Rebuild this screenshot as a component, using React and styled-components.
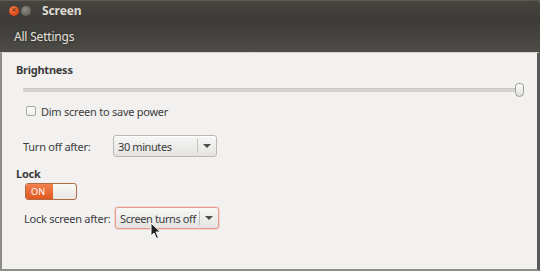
import React from "react";
import styled, { createGlobalStyle } from "styled-components";

const Global = createGlobalStyle`
  html, body { margin: 0; padding: 0; background: #5a5955; }
  body { font-family: "Noto Sans", "DejaVu Sans", sans-serif; }
`;

const Window = styled.div`
  width: 540px;
  height: 271px;
  display: flex;
  flex-direction: column;
  overflow: hidden;
  position: relative;
  background: #3c3b37;
  border-top-right-radius: 6px;
`;

const TitleBar = styled.div`
  height: 20px;
  display: flex;
  align-items: center;
  padding-left: 9px;
  gap: 2px;
  background: linear-gradient(#45443f, #3c3b37);
  border-top: 1px solid #5c5b56;
  box-sizing: border-box;
`;

const WinButton = styled.span`
  width: 10px;
  height: 10px;
  border-radius: 50%;
  background: ${(p) => (p.$close ? "radial-gradient(circle at 40% 35%, #f48a5c, #df4a16 60%, #b83a10)" : "radial-gradient(circle at 40% 35%, #8c8b86, #6b6a65 60%, #55544f)")};
  display: flex;
  align-items: center;
  justify-content: center;
  font-size: 7px;
  line-height: 1;
  color: #7a2a0a;
  font-weight: bold;
  font-family: "DejaVu Sans", sans-serif;
`;

const Title = styled.span`
  margin-left: 9px;
  font-size: 12px;
  font-weight: bold;
  color: #dfdbd2;
  letter-spacing: -0.1px;
`;

const Toolbar = styled.div`
  height: 32px;
  display: flex;
  align-items: center;
  padding-left: 14px;
  background: linear-gradient(#3c3b37, #4d4c47);
`;

const ToolText = styled.span`
  font-size: 12px;
  color: #e4e1da;
  letter-spacing: -0.2px;
  text-shadow: 0 0 3px #2a2926;
`;

const Content = styled.div`
  flex: 1;
  background: #f2f1f0;
  border-left: 2px solid #8e8d89;
  border-right: 3px solid #5a5955;
  border-bottom: 2px solid #8e8d89;
  border-top: 1px solid #d8d6d2;
  padding: 5px 14px 0 14px;
  display: flex;
  flex-direction: column;
  font-size: 11px;
  color: #3c3c3c;
  letter-spacing: -0.25px;
`;

const Heading = styled.div`
  font-weight: bold;
  font-size: 11px;
  color: #3c3c3c;
  height: ${(p) => p.$h || 20}px;
  margin-top: ${(p) => p.$top || 0}px;
  display: flex;
  align-items: center;
`;

const SliderRow = styled.div`
  height: 18px;
  margin: 1px 0 0 7px;
  width: 501px;
  position: relative;
  display: flex;
  align-items: center;
`;

const Track = styled.div`
  flex: 1;
  height: 3px;
  background: #d6d4d0;
  border-top: 1px solid #c8c6c2;
  border-radius: 1px;
`;

const Handle = styled.div`
  position: absolute;
  right: 0;
  top: 2px;
  width: 7px;
  height: 12px;
  border: 1px solid #9a9995;
  border-radius: 4px 4px 5px 5px;
  background: linear-gradient(#fbfbfa, #e2e1de);
`;

const CheckRow = styled.label`
  display: flex;
  align-items: center;
  gap: 5px;
  height: 20px;
  margin: 2px 0 0 10px;
`;

const Box = styled.span`
  width: 8px;
  height: 8px;
  border: 1px solid #a9a8a4;
  border-radius: 2px;
  background: linear-gradient(#ffffff, #eeeeec);
`;

const FieldRow = styled.div`
  display: flex;
  align-items: center;
  margin-left: ${(p) => p.$indent}px;
  margin-top: ${(p) => p.$top}px;
  height: 22px;
`;

const FieldLabel = styled.span`
  width: ${(p) => p.$w}px;
  flex-shrink: 0;
`;

const Combo = styled.div`
  width: 104px;
  height: 22px;
  box-sizing: border-box;
  border: 1px solid ${(p) => (p.$focus ? "#e49a8a" : "#b9b8b4")};
  box-shadow: ${(p) => (p.$focus ? "0 0 0 1px #f2d6cf" : "0 1px 0 #fff inset")};
  border-radius: 3px;
  background: linear-gradient(#f7f7f6, #e4e3e0);
  display: flex;
  align-items: center;
  padding-left: 4px;
`;

const ComboText = styled.span`
  flex: 1;
  white-space: nowrap;
  letter-spacing: -0.4px;
`;

const Sep = styled.span`
  width: 1px;
  height: 14px;
  background: #c4c3bf;
  margin-right: 5px;
`;

const Arrow = styled.span`
  width: 0;
  height: 0;
  border-left: 4px solid transparent;
  border-right: 4px solid transparent;
  border-top: 4px solid #4c4c4c;
  margin-right: 5px;
`;

const Switch = styled.div`
  width: 52px;
  height: 17px;
  box-sizing: border-box;
  margin-left: 9px;
  margin-top: 1px;
  border: 1px solid #b26a45;
  border-radius: 3px;
  overflow: hidden;
  display: flex;
  background: linear-gradient(#f9f9f8, #e6e5e2);
`;

const SwitchOn = styled.span`
  width: 27px;
  background: linear-gradient(#f2804f, #e0591f);
  color: #fff;
  font-size: 9px;
  letter-spacing: 0.3px;
  display: flex;
  align-items: center;
  padding-left: 5px;
  box-sizing: border-box;
`;

const Cursor = styled.svg`
  position: absolute;
  left: 150px;
  top: 222px;
`;

export default function App() {
  return (
    <>
      <Global />
      <Window>
        <TitleBar>
          <WinButton $close>×</WinButton>
          <WinButton />
          <Title>Screen</Title>
        </TitleBar>
        <Toolbar>
          <ToolText>All Settings</ToolText>
        </Toolbar>
        <Content>
          <Heading $h={22}>Brightness</Heading>
          <SliderRow>
            <Track />
            <Handle />
          </SliderRow>
          <CheckRow>
            <Box />
            <span>Dim screen to save power</span>
          </CheckRow>
          <FieldRow $indent={7} $top={14}>
            <FieldLabel $w={90}>Turn off after:</FieldLabel>
            <Combo>
              <ComboText>30 minutes</ComboText>
              <Sep />
              <Arrow />
            </Combo>
          </FieldRow>
          <Heading $h={18} $top={7}>Lock</Heading>
          <Switch>
            <SwitchOn>ON</SwitchOn>
          </Switch>
          <FieldRow $indent={8} $top={7}>
            <FieldLabel $w={91}>Lock screen after:</FieldLabel>
            <Combo $focus>
              <ComboText>Screen turns off</ComboText>
              <Sep />
              <Arrow />
            </Combo>
          </FieldRow>
        </Content>
        <Cursor width="12" height="18" viewBox="0 0 12 18">
          <path d="M1 1 L1 14 L4 11 L6.5 16.5 L8.5 15.5 L6 10 L10.5 10 Z" fill="#222" stroke="#fff" strokeWidth="1" />
        </Cursor>
      </Window>
    </>
  );
}
